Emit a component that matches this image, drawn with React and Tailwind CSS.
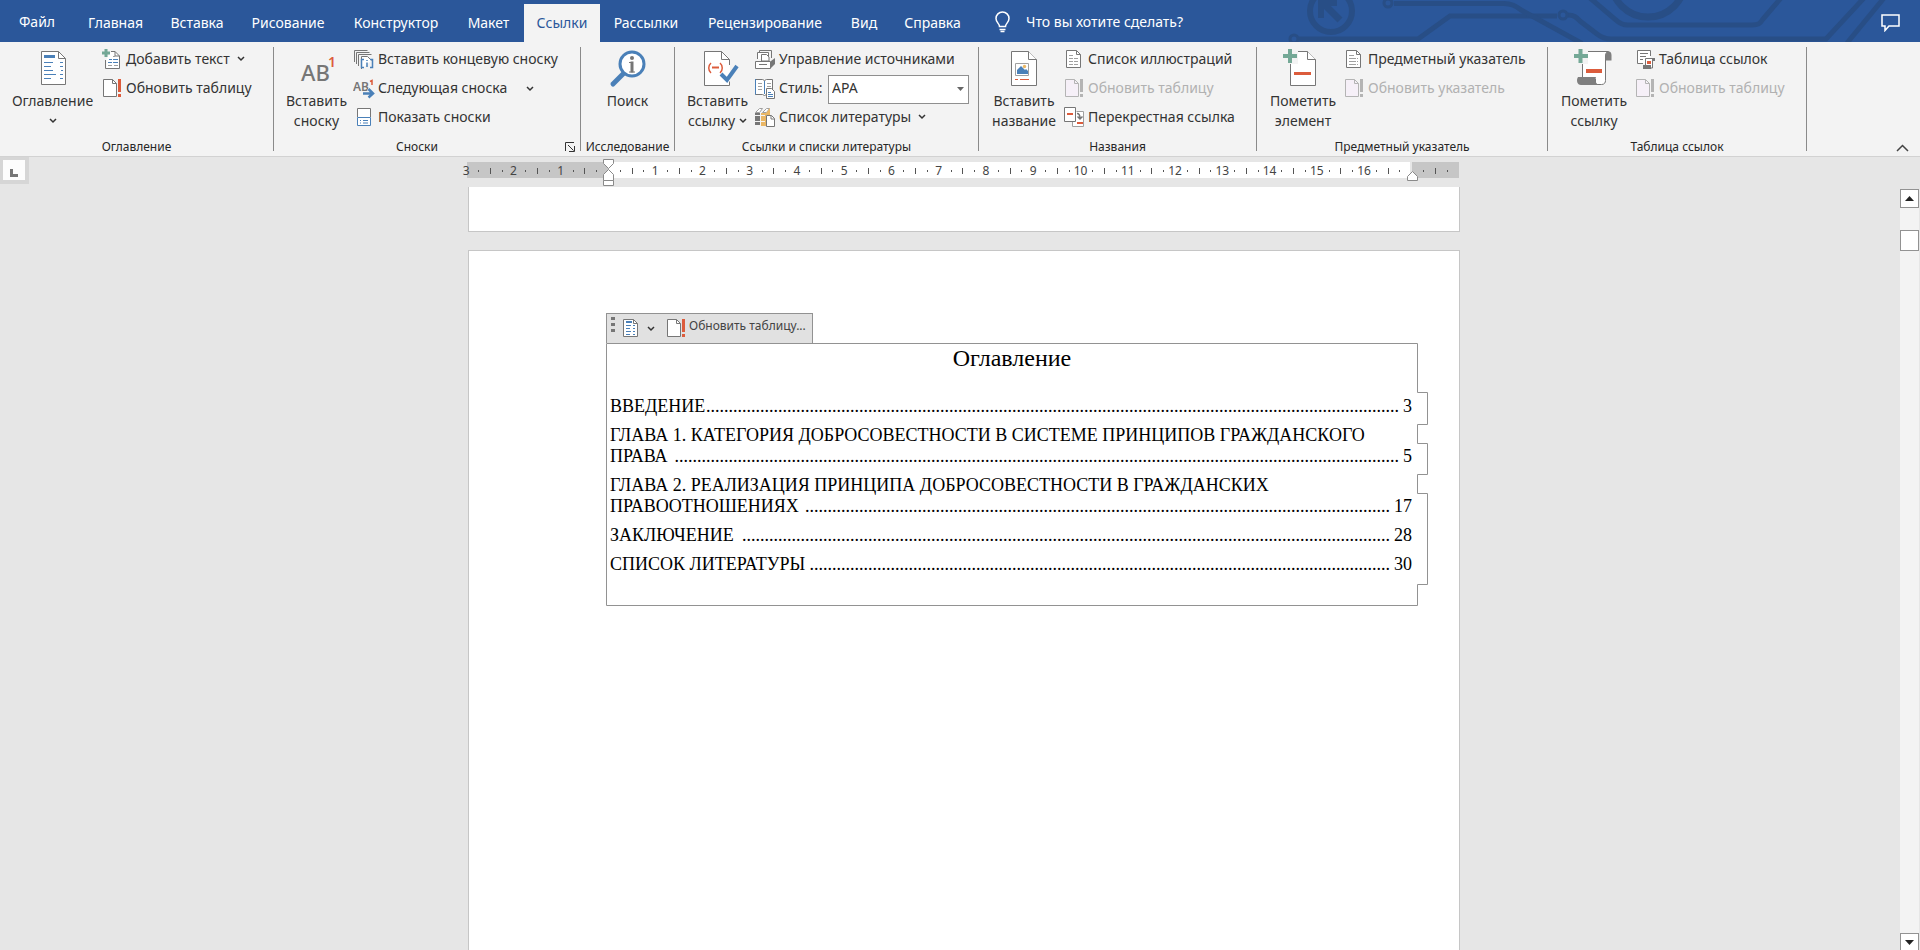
import { useState } from "react";

const tabs = [
  { name: "Главная", width: "w-[83px]" },
  { name: "Вставка", width: "w-[80px]" },
  { name: "Рисование", width: "w-[102px]" },
  { name: "Конструктор", width: "w-[114px]" },
  { name: "Макет", width: "w-[71px]" },
  { name: "Ссылки", width: "w-[76px]" },
  { name: "Рассылки", width: "w-[92px]" },
  { name: "Рецензирование", width: "w-[146px]" },
  { name: "Вид", width: "w-[52px]" },
  { name: "Справка", width: "w-[85px]" },
];

const toc = [
  { lines: ["ВВЕДЕНИЕ"], page: 3, dots: 154 },
  {
    lines: [
      "ГЛАВА 1. КАТЕГОРИЯ ДОБРОСОВЕСТНОСТИ В СИСТЕМЕ ПРИНЦИПОВ ГРАЖДАНСКОГО",
      "ПРАВА",
    ],
    page: 5,
    dots: 161,
  },
  {
    lines: [
      "ГЛАВА 2. РЕАЛИЗАЦИЯ ПРИНЦИПА ДОБРОСОВЕСТНОСТИ В ГРАЖДАНСКИХ",
      "ПРАВООТНОШЕНИЯХ",
    ],
    page: 17,
    dots: 130,
  },
  { lines: ["ЗАКЛЮЧЕНИЕ"], page: 28, dots: 144 },
  { lines: ["СПИСОК ЛИТЕРАТУРЫ"], page: 30, dots: 129 },
];

/* ---------- icons ---------- */

const Chevron = ({ className = "" }) => (
  <svg className={`shrink-0 ${className}`} width="8" height="6" viewBox="0 0 8 6" fill="none" stroke="#333" strokeWidth="1.5">
    <path d="M1 1l3 3 3-3" />
  </svg>
);

const Small = ({ children }) => (
  <svg className="shrink-0" width="22" height="22" viewBox="0 0 22 22" fill="none">
    {children}
  </svg>
);

const Big = ({ children }) => (
  <svg className="shrink-0 overflow-visible" width="40" height="40" viewBox="0 0 40 40" fill="none">
    {children}
  </svg>
);

const BigPage = ({ x = 7 }) => (
  <g stroke="#767676" fill="#fff">
    <path d={`M${x + 0.5} 4.5h17l8 8v26h-25z`} />
    <path d={`M${x + 17.5} 4.5v8h8`} />
  </g>
);

const TocIcon = () => (
  <Big>
    <path d="M8.5 4.5h17l7 7v26h-24z" fill="#fff" stroke="#767676" />
    <path d="M25.5 4.5v7h7" stroke="#767676" />
    <path d="M11 9.500h11" stroke="#4a80b8" strokeWidth="3" />
    <path
      d="M11 15.500h9M11 19.500h7M11 23.500h9M11 27.500h12M11 31.500h7M27 15.500h3M27 19.500h3M28 23.500h2M27 27.500h3M27 31.500h3"
      stroke="#4a80b8"
    />
  </Big>
);

const FootnoteIcon = () => (
  <Big>
    <text x="4" y="34" fill="#767676" fontSize="22" fontWeight="500" fontFamily="Noto Sans, sans-serif">
      AB
    </text>
    <text x="31" y="20" fill="#dc5c3c" fontSize="14" fontWeight="600" fontFamily="Noto Sans, sans-serif">
      1
    </text>
  </Big>
);

const SearchIcon = () => (
  <Big>
    <path d="M5 37l11-11" stroke="#4a80b8" strokeWidth="5" strokeLinecap="round" />
    <circle cx="24" cy="17" r="12" fill="#fff" stroke="#4a80b8" strokeWidth="3" />
    <circle cx="24" cy="11" r="2" fill="#767676" />
    <path d="M24 14.500v11" stroke="#767676" strokeWidth="3" />
    <path d="M21 15.500h3M21 25h6" stroke="#767676" />
  </Big>
);

const CitationIcon = () => (
  <Big>
    <path d="M32 20v-8l-8-7.500H6.500v34H32v-5" fill="#fff" />
    <path d="M31.500 18v-5.500l-8-8h-17v34h25v-4M23.500 4.500v8h8" stroke="#767676" />
    <path d="M13 16c-3 2.500-3 7.500 0 10M22 16c3 2.500 3 7.500 0 10" stroke="#dc5c3c" strokeWidth="1.500" />
    <path d="M14 20.500h7" stroke="#dc5c3c" strokeWidth="2" />
    <path d="M23 27l6 6 10-14" stroke="#4a80b8" strokeWidth="4" />
  </Big>
);

const CaptionIcon = () => (
  <Big>
    <BigPage />
    <path d="M11.500 16.500h13v12h-13z" fill="#fff" stroke="#a0a0a0" />
    <path d="M13 27v-4l4-4 4 4 1-1 2 2v3z" fill="#4a80b8" />
    <circle cx="20.500" cy="19.500" r="1.700" fill="#eab765" />
    <path d="M11 32.500h3M16 32.500h9" stroke="#dc5c3c" />
  </Big>
);

const MarkEntryIcon = () => (
  <Big>
    <BigPage />
    <path d="M0 1h15v16H0z" fill="#f3f3f3" />
    <path d="M10 17h5v-12h5v16h-10z" fill="#fff" />
    <path d="M7 2v14M0 9h14" stroke="#74a896" strokeWidth="4" />
    <path d="M11 26.500h17" stroke="#dc5c3c" strokeWidth="3" />
  </Big>
);

const MarkCitationIcon = () => (
  <Big>
    <path d="M8.500 12V32h13v5.500h6c3 0 4-2 4-4V9c0-3 1.500-4.500 3-4.500H13" fill="#fff" stroke="#767676" />
    <path d="M31.500 13.500V9c0-3 1.500-5 4-4.500 2 .5 2 3 2 4.500v4.500z" fill="#7f7f7f" />
    <path d="M4 30h18c-1.500 3 0 8 4 8H7c-4 0-5-5-3-8z" fill="#7f7f7f" />
    <path d="M0 1h14v16H0z" fill="#f3f3f3" />
    <path d="M6.500 2v14M0 9h14" stroke="#74a896" strokeWidth="4" />
    <path d="M12 24h16" stroke="#dc5c3c" strokeWidth="4" />
  </Big>
);

const AddTextIcon = () => (
  <Small>
    <path d="M5.500 10v9.500h13V7l-4.500-4.500h-4z" fill="#fff" />
    <path d="M4.500 11v8.500h14V7l-4.500-4.500h-4M14 2.500V7h4.500" stroke="#767676" />
    <path d="M7 16.500h4M13 16.500h4M12 7.500h2" stroke="#a0a0a0" />
    <path d="M8 10.500h3M12 10.500h5M7 13.500h4M12 13.500h5" stroke="#4a80b8" />
    <path d="M5 0v8M1 4h8" stroke="#74a896" strokeWidth="3" />
  </Small>
);

const UpdateIcon = ({ disabled }) => (
  <Small>
    <path d="M2.500 1.500h9l4 4v13h-13z" fill={disabled ? "#f6f0f8" : "#fff"} stroke={disabled ? "#b4b4b4" : "#767676"} />
    <path d="M11.500 1.500v4h4" stroke={disabled ? "#b4b4b4" : "#767676"} />
    <path
      d="M18.500 1v13M18.500 16v3"
      stroke={disabled ? "#b4b4b4" : "#dc5c3c"}
      strokeWidth="3"
    />
  </Small>
);

const EndnoteIcon = () => (
  <Small>
    <path d="M1.500 13V1.500h13M3.500 15V3.500h13M5.500 17V5.500h13" stroke="#767676" />
    <path d="M8.500 20V7.500h6l4 4" fill="#fff" stroke="#767676" />
    <path d="M11 10.500H8.500v8H11M17 10.500h2.500v8H17M14 13.500V18M14 11v1" stroke="#4a80b8" strokeWidth="1.500" />
  </Small>
);

const NextFootnoteIcon = () => (
  <Small>
    <text x="0" y="13" fill="#767676" fontSize="12" fontWeight="600" fontFamily="Noto Sans, sans-serif">
      AB
    </text>
    <path d="M17 3.500l2-1V7" stroke="#dc5c3c" strokeWidth="1.500" />
    <path d="M10 15.500h10M15.500 10.500l5 5-5 4.500" stroke="#f3f3f3" strokeWidth="4" />
    <path d="M10 15.500h10M15.500 11l4.500 4.500-4.500 4" stroke="#4a80b8" strokeWidth="2.500" />
  </Small>
);

const ShowNotesIcon = () => (
  <Small>
    <path d="M4.500 1.500h13v17h-13z" fill="#fff" />
    <path d="M4.500 10V1.500h13V10" stroke="#767676" />
    <path d="M4.500 10.500h13v8h-13zM7 13.500h1M10 13.500h5M7 16h1M10 16h5" stroke="#4a80b8" />
  </Small>
);

const SourcesIcon = () => (
  <Small>
    <path d="M5.500 4V1.500h12V9" stroke="#767676" />
    <path d="M3.500 10V3.500h11V10" fill="#fff" stroke="#767676" />
    <path d="M7.500 12V5.500h5l2.500 2.500v4z" fill="#fff" stroke="#767676" />
    <path d="M1.500 12.500h15v7h-15z" fill="#fff" stroke="#767676" />
    <path d="M5 15.500h8" stroke="#767676" />
    <path d="M17 12l4-3v6l-4 4z" fill="#767676" />
  </Small>
);

const StyleIcon = () => (
  <Small>
    <path d="M1.500 1.500h7l2 1 2-1h6v15h-6l-2 1-2-1h-7z" fill="#fff" stroke="#767676" />
    <path d="M1.500 1v15.500M10.500 3v13" stroke="#4a80b8" />
    <path d="M4 5.500h4M4 8.500h4M4 11.500h4M13 5.500h4M13 8.500h4" stroke="#a0a0a0" />
    <path d="M12.500 10.500h5l3 3v7h-8z" fill="#fff" stroke="#767676" />
    <path d="M14 14.500h3M14 16.500h5M14 18.500h5" stroke="#4a80b8" />
  </Small>
);

const BibliographyIcon = () => (
  <Small>
    <path d="M1.500 5.500l4-4h3l-3 4zM8.500 5.500l4-4h3l-3 4z" fill="#fff" stroke="#a0a0a0" />
    <path d="M1 6h5v12H1z" fill="#767676" />
    <path d="M7 6h5l4-5v7h-4v11H7z" fill="#eab765" />
    <path d="M1 8.500h5M7 8.500h4M1 14.500h5M7 14.500h4" stroke="#f3f3f3" />
    <path d="M12.500 8.500h5l3 3v8h-8z" fill="#fff" stroke="#767676" />
    <path d="M17 8.500v3.500h3.500" stroke="#767676" />
  </Small>
);

const ListIcon = ({ dashed }) => (
  <Small>
    <path d="M3.500 1.500h10l4 4v13h-14z" fill="#fff" stroke="#767676" />
    <path d="M13.500 1.500v4h4" stroke="#767676" />
    <path
      d="M6 6.500h5M6 9.500h9M6 12.500h9M6 15.500h9"
      stroke="#a0a0a0"
      strokeDasharray={dashed ? "4 1" : "7 1"}
    />
  </Small>
);

const CrossRefIcon = () => (
  <Small>
    <path d="M13.500 4.500h7v15H9.500V13" fill="#fff" stroke="#a0a0a0" />
    <path d="M1.500.500h11v14h-11z" fill="#fff" stroke="#767676" />
    <path d="M4 7h6M14 16h6" stroke="#dc5c3c" strokeWidth="2" />
    <path d="M14 6.500c2 0 3 1 3 5M14.500 9.500l2.500 2.500 2.500-2.500" stroke="#767676" strokeWidth="1.500" />
  </Small>
);

const AuthoritiesIcon = () => (
  <Small>
    <path d="M3.500 1.500h13v13h-13z" fill="#fff" />
    <path d="M16.500 7V1.500h-13v13H9M6 4.500h8M6 7.500h6M6 10.500h3" stroke="#767676" />
    <path d="M11.500 16V9.500h7V19h-7" fill="#fff" stroke="#767676" />
    <path d="M18 9h3v3h-3zM9 16h8v4h-8z" fill="#767676" />
    <path d="M13 13.500h4" stroke="#dc5c3c" strokeWidth="3" />
  </Small>
);

const HeaderArt = () => (
  <svg
    className="absolute right-0 top-0"
    width="640"
    height="42"
    viewBox="1280 0 640 42"
    fill="none"
    stroke="#284e86"
    strokeWidth="5"
  >
    <circle cx="1331" cy="11" r="21" strokeWidth="6" />
    <path d="M1340 20l-18-18" strokeWidth="7" />
    <path d="M1321 18V3h16" strokeWidth="6" />
    <circle cx="1294" cy="39" r="4" strokeWidth="3" />
    <path d="M1299 39h119l32-23h107M1568 15c6 0 8 2 12 6l17 13c5 4 8 5 14 5h215l38-41" />
    <circle cx="1563" cy="15" r="4" strokeWidth="3" />
    <circle cx="1388" cy="3" r="4" strokeWidth="3" />
    <path d="M1394 3.500h110c8 0 12 3 18 7l60 33" />
    <path d="M1590-2l26 22c4 4 7 5 12 5h124c6 0 8-1 11-6l18-21" />
    <circle cx="1648" cy="-20" r="37" strokeWidth="7" />
    <path d="M1847 43l37-45" />
  </svg>
);

/* ---------- ribbon ---------- */

const Group = ({ label, width, children, launcher }) => (
  <>
    <section className={`${width} flex flex-col pt-[5px] shrink-0`} aria-label={label}>
      <div className="flex h-[84px]">{children}</div>
      <div className="mt-2 flex items-center justify-center leading-4 text-xs text-[#262626]">
        <span className="flex-1 text-center whitespace-nowrap">{label}</span>
        {launcher && (
          <button type="button" aria-label="Параметры сносок" className="w-5 flex justify-center">
            <svg width="10" height="10" viewBox="0 0 10 10" fill="none" stroke="#333">
              <path d="M.5 9V.5H9M3 3l5.500 5.500M4 9.500h5.500V4" />
            </svg>
          </button>
        )}
      </div>
    </section>
    <div className="w-px h-[104px] mt-[5px] bg-[#8a8a8a] shrink-0"></div>
  </>
);

const BigButton = ({ icon, lines, arrow, width }) => (
  <button type="button" className={`${width} shrink-0 flex flex-col items-center leading-5`}>
    {icon}
    <span className="mt-1 whitespace-nowrap">{lines[0]}</span>
    <span className="flex items-center gap-1 whitespace-nowrap min-h-5">
      {lines[1]}
      {arrow && <Chevron />}
    </span>
  </button>
);

const SmallButton = ({ icon, text, arrow, disabled }) => (
  <button
    type="button"
    disabled={disabled}
    className={`flex items-center h-[26px] gap-[3px] whitespace-nowrap ${
      disabled ? "text-[#b1b1b1]" : ""
    }`}
  >
    {icon}
    <span className="pb-0.5">{text}</span>
    {arrow && <Chevron className={arrow} />}
  </button>
);

const Ribbon = () => {
  const [style, setStyle] = useState("APA");

  return (
    <div className="flex h-[115px] bg-[#f3f3f3] border-b border-[#d2d2d2] text-sm text-[#333] shrink-0">
      <Group label="Оглавление" width="w-[273px]">
        <BigButton width="w-[101px] pl-1" icon={<TocIcon />} lines={["Оглавление"]} arrow />
        <div className="flex flex-col gap-[3px]">
          <SmallButton icon={<AddTextIcon />} text="Добавить текст" arrow="ml-1 mb-0.5" />
          <SmallButton icon={<UpdateIcon />} text="Обновить таблицу" />
        </div>
      </Group>
      <Group label="Сноски" width="w-[306px]" launcher>
        <BigButton width="w-[79px] pl-1.5" icon={<FootnoteIcon />} lines={["Вставить", "сноску"]} />
        <div className="flex flex-col gap-[3px]">
          <SmallButton icon={<EndnoteIcon />} text="Вставить концевую сноску" />
          <SmallButton icon={<NextFootnoteIcon />} text="Следующая сноска" arrow="ml-4" />
          <SmallButton icon={<ShowNotesIcon />} text="Показать сноски" />
        </div>
      </Group>
      <Group label="Исследование" width="w-[93px]">
        <BigButton width="w-full" icon={<SearchIcon />} lines={["Поиск"]} />
      </Group>
      <Group label="Ссылки и списки литературы" width="w-[303px]">
        <BigButton width="w-[79px] pl-1.5" icon={<CitationIcon />} lines={["Вставить", "ссылку"]} arrow />
        <div className="flex flex-col gap-[3px]">
          <SmallButton icon={<SourcesIcon />} text="Управление источниками" />
          <div className="flex items-center h-[26px] gap-[3px]">
            <StyleIcon />
            <label htmlFor="cite-style" className="w-[46px] pb-0.5">
              Стиль:
            </label>
            <div className="relative">
              <select
                id="cite-style"
                value={style}
                onChange={(e) => setStyle(e.target.value)}
                className="block appearance-none w-[141px] h-[29px] pl-[3px] pb-0.5 bg-white border border-[#8f8f8f] text-[#333]"
              >
                <option>APA</option>
                <option>MLA</option>
                <option>Chicago</option>
              </select>
              <svg className="absolute right-[5px] top-3 pointer-events-none" width="7" height="4" viewBox="0 0 7 4">
                <path d="M0 0h7L3.500 4z" fill="#666" />
              </svg>
            </div>
          </div>
          <SmallButton icon={<BibliographyIcon />} text="Список литературы" arrow="ml-1 mb-0.5" />
        </div>
      </Group>
      <Group label="Названия" width="w-[277px]">
        <BigButton width="w-[84px] pl-1.5" icon={<CaptionIcon />} lines={["Вставить", "название"]} />
        <div className="flex flex-col gap-[3px]">
          <SmallButton icon={<ListIcon dashed />} text="Список иллюстраций" />
          <SmallButton icon={<UpdateIcon disabled />} text="Обновить таблицу" disabled />
          <SmallButton icon={<CrossRefIcon />} text="Перекрестная ссылка" />
        </div>
      </Group>
      <Group label="Предметный указатель" width="w-[290px]">
        <BigButton width="w-[86px] pl-1.5" icon={<MarkEntryIcon />} lines={["Пометить", "элемент"]} />
        <div className="flex flex-col gap-[3px]">
          <SmallButton icon={<ListIcon />} text="Предметный указатель" />
          <SmallButton icon={<UpdateIcon disabled />} text="Обновить указатель" disabled />
        </div>
      </Group>
      <Group label="Таблица ссылок" width="w-[258px]">
        <BigButton width="w-[86px] pl-1.5" icon={<MarkCitationIcon />} lines={["Пометить", "ссылку"]} />
        <div className="flex flex-col gap-[3px]">
          <SmallButton icon={<AuthoritiesIcon />} text="Таблица ссылок" />
          <SmallButton icon={<UpdateIcon disabled />} text="Обновить таблицу" disabled />
        </div>
      </Group>
      <button type="button" aria-label="Свернуть ленту" className="ml-auto self-end mr-[11px] mb-1">
        <svg width="13" height="8" viewBox="0 0 13 8" fill="none" stroke="#444" strokeWidth="1.500">
          <path d="M1 7l5.500-5.500L12 7" />
        </svg>
      </button>
    </div>
  );
};

/* ---------- ruler ---------- */

const CM = 47.25;
const ZERO = 148;

const Ruler = () => {
  const marks = [];
  for (let q = -12; q <= 75; q++) {
    const x = ZERO + (q * CM) / 4;
    if (q === 0 || q === 68 || x > 990) continue;
    if (q % 4 === 0) {
      marks.push(
        <text key={q} x={x} y="18" textAnchor="middle" fontSize="12" fill="#444">
          {Math.abs(q / 4)}
        </text>
      );
    } else if (q % 2 === 0) {
      marks.push(<rect key={q} x={Math.round(x)} y="11" width="1" height="6" fill="#555" />);
    } else {
      marks.push(<rect key={q} x={Math.round(x)} y="13" width="1" height="2" fill="#555" />);
    }
  }
  return (
    <svg width="1008" height="30" viewBox="0 0 1008 30" fontFamily="Noto Sans, sans-serif" className="shrink-0">
      <rect x="7" y="5" width="142" height="16" fill="#c6c6c6" />
      <rect x="149" y="5" width="801" height="16" fill="#fff" />
      <rect x="952" y="5" width="47" height="16" fill="#c6c6c6" />
      {marks}
      <g fill="#fff" stroke="#8a8a8a">
        <path d="M143.500 2.500h10v4l-5 5-5-5z" />
        <path d="M143.500 23.500v-6l5-5 5 5v6z" />
        <path d="M143.500 23.500h10v5h-10z" />
        <path d="M947.500 23.500v-4l5-5 5 5v4z" />
      </g>
    </svg>
  );
};

/* ---------- document ---------- */

const TocEntry = ({ lines, page, dots }) => {
  const last = lines[lines.length - 1];
  return (
    <a href={`#page-${page}`} className="block">
      {lines.slice(0, -1).map((line) => (
        <span key={line} className="block whitespace-nowrap">
          {line}
        </span>
      ))}
      <span className="flex whitespace-nowrap">
        <span>{last}</span>
        <span className="ml-auto" aria-hidden="true">
          {".".repeat(dots)}
        </span>
        <span className="ml-1">{page}</span>
      </span>
    </a>
  );
};

const TocBlock = () => (
  <div className="ml-[137px] w-[822px]">
    <div className="flex items-center w-[207px] h-[30px] bg-[#e1e1e1] border border-b-0 border-[#929292] text-xs text-[#444]">
      <svg width="4" height="16" viewBox="0 0 4 16" className="ml-1 mb-2" fill="#767676">
        <path d="M0 0h4v3H0zM0 6h4v3H0zM0 12h4v3H0z" />
      </svg>
      <button type="button" aria-label="Оглавление" className="ml-2 flex items-center gap-2">
        <svg width="16" height="19" viewBox="0 0 16 19" fill="none">
          <path d="M.5.500h10l4 4v13H.500z" fill="#fff" stroke="#767676" />
          <path d="M10.500.500v4h4" stroke="#767676" />
          <path d="M3 3h6" stroke="#4a80b8" strokeWidth="2" />
          <path d="M3 6.500h5M3 9.500h4M3 12.500h5M3 15.500h4M10 6.500h2M10 9.500h2M10 12.500h2M10 15.500h2" stroke="#4a80b8" />
        </svg>
        <Chevron />
      </button>
      <button type="button" className="ml-2.5 flex items-center gap-0.5 whitespace-nowrap">
        <UpdateIcon />
        <span className="pb-1.5">Обновить таблицу...</span>
      </button>
    </div>
    <div className="relative h-[263px] font-['Liberation_Serif',serif] text-black">
      <svg className="absolute left-0 top-0 pointer-events-none" width="822" height="263" viewBox="0 0 822 263" fill="none" stroke="#929292">
        <path d="M.5.500h811v49h10v32h-10v19h10v31h-10v19h10v91h-10v21H.500z" />
      </svg>
      <h1 className="w-[812px] pt-px text-center text-2xl leading-7">Оглавление</h1>
      <nav className="ml-1 mt-6 w-[802px] flex flex-col gap-2 text-[18px] leading-[21px]">
        {toc.map((item) => (
          <TocEntry key={item.page} lines={item.lines} page={item.page} dots={item.dots} />
        ))}
      </nav>
    </div>
  </div>
);

const Scrollbar = () => (
  <div className="w-5 pt-0.5 pr-px flex flex-col shrink-0">
    <button type="button" aria-label="Вверх" className="h-[19px] bg-white border border-[#929292] flex items-center justify-center">
      <svg width="9" height="5" viewBox="0 0 9 5">
        <path d="M0 5h9L4.500 0z" fill="#222" />
      </svg>
    </button>
    <div className="flex-1 bg-[#f3f3f3] pt-[22px]">
      <div className="h-[21px] bg-white border border-[#929292]"></div>
    </div>
    <button type="button" aria-label="Вниз" className="h-[17px] bg-white border border-b-0 border-[#929292] flex items-center justify-center">
      <svg width="9" height="5" viewBox="0 0 9 5">
        <path d="M0 0h9L4.500 5z" fill="#222" />
      </svg>
    </button>
  </div>
);

const App = () => {
  const [active, setActive] = useState("Ссылки");

  return (
    <div className="h-screen flex flex-col overflow-hidden bg-[#e6e6e6] font-['Noto_Sans',sans-serif]">
      <header className="relative flex h-[42px] bg-[#2b579a] text-white text-sm shrink-0">
        <HeaderArt />
        <button type="button" className="w-[74px] pt-0.5 shrink-0">
          Файл
        </button>
        <nav className="flex pt-1">
          {tabs.map((tab) => (
            <button
              type="button"
              key={tab.name}
              onClick={() => setActive(tab.name)}
              className={`${tab.width} ${
                active === tab.name ? "bg-[#f3f3f3] text-[#2b579a]" : ""
              }`}
            >
              {tab.name}
            </button>
          ))}
        </nav>
        <div className="relative flex items-center pt-0.5 ml-5">
          <svg width="15" height="22" viewBox="0 0 15 22" fill="none" stroke="#fff" strokeWidth="1.500">
            <path d="M4.500 15.500c0-3-3.500-4-3.500-8a6.500 6.500 0 0 1 13 0c0 4-3.500 5-3.500 8z" />
            <path d="M4.500 18.500h6M5.500 20.500h4" />
          </svg>
          <input
            type="text"
            aria-label="Что вы хотите сделать?"
            placeholder="Что вы хотите сделать?"
            className="ml-4 w-60 bg-transparent outline-none placeholder:text-white"
          />
        </div>
        <button type="button" aria-label="Примечания" className="ml-auto mr-5 pt-1 relative">
          <svg width="19" height="18" viewBox="0 0 19 18" fill="none" stroke="#fff" strokeWidth="1.500">
            <path d="M1 1h17v11H8l-4 4.500V12H1z" />
          </svg>
        </button>
      </header>

      <Ribbon />

      <div className="flex h-[30px] shrink-0">
        <div className="w-[29px] h-[27px] bg-[#d6d6d6] p-[3px] pb-1">
          <button type="button" aria-label="Табуляция" className="w-[22px] h-5 bg-[#fdfdfd] flex items-end justify-center pb-[3px]">
            <svg width="8" height="8" viewBox="0 0 8 8">
              <path d="M0 0h3v5h5v3H0z" fill="#767676" />
            </svg>
          </button>
        </div>
        <div className="flex-1 flex justify-center">
          <Ruler />
        </div>
        <div className="w-[21px]"></div>
      </div>

      <div className="flex flex-1 min-h-0">
        <main className="flex-1 pl-7 flex flex-col items-center overflow-hidden">
          <div className="w-[992px] h-[45px] shrink-0 bg-white border border-t-0 border-[#c6c6c6]"></div>
          <div className="w-[992px] mt-[18px] flex-1 pt-[62px] bg-white border border-b-0 border-[#c6c6c6]">
            <TocBlock />
          </div>
        </main>
        <Scrollbar />
      </div>
    </div>
  );
};

export default App;
